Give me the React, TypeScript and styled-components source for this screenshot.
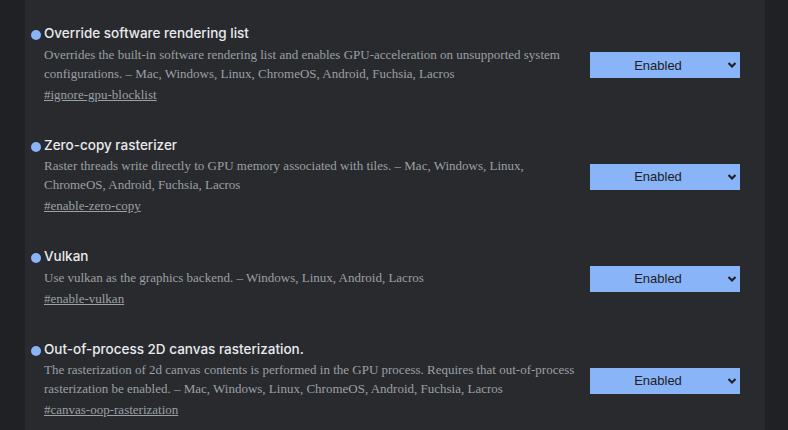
import React from "react";
import styled, { createGlobalStyle } from "styled-components";

const Global = createGlobalStyle`
  html, body { margin: 0; padding: 0; background: #202124; }
  body { width: 788px; height: 430px; overflow: hidden; }
`;

const Page = styled.div`
  display: flex;
  height: 430px;
  padding-left: 25px;
  background: #202124;
`;

const Panel = styled.div`
  width: 740px;
  background: #292a2d;
  padding: 23.4px 25px 0 6px;
  box-sizing: border-box;
  display: flex;
  flex-direction: column;
  gap: 31px;
`;

const Item = styled.div`
  display: grid;
  grid-template-columns: 13px 536px 1fr;
  align-items: center;
`;

const Dot = styled.span`
  align-self: start;
  width: 10px;
  height: 10px;
  margin-top: 7px;
  border-radius: 50%;
  background: #8ab4f8;
`;

const Body = styled.div`
  display: flex;
  flex-direction: column;
`;

const Title = styled.h3`
  margin: 0;
  font-family: Inter, "Noto Sans", sans-serif;
  font-weight: 500;
  font-size: 13.5px;
  line-height: 21.5px;
  color: #e8eaed;
  letter-spacing: 0;
`;

const Desc = styled.p`
  margin: 0;
  font-family: "Liberation Serif", serif;
  font-size: 13px;
  line-height: 19px;
  color: #9aa0a6;
`;

const Link = styled.a`
  margin-top: 2px;
  font-family: "Liberation Serif", serif;
  font-size: 13px;
  line-height: 19px;
  color: #9aa0a6;
  text-decoration: underline;
  align-self: flex-start;
`;

const SelectBox = styled.div`
  justify-self: end;
  margin: 3px 0 0 10px;
  width: 150px;
  height: 26px;
  box-sizing: border-box;
  background: #8ab4f8;
  display: flex;
  align-items: center;
  position: relative;
  font-family: "Liberation Sans", Arial, sans-serif;
  font-size: 13px;
  color: #202124;
`;

const SelectLabel = styled.span`
  flex: 1;
  text-align: center;
  padding-right: 14px;
`;

const Chevron = styled.svg`
  position: absolute;
  right: 3px;
  top: 9px;
`;

const flags = [
  {
    title: "Override software rendering list",
    desc: "Overrides the built-in software rendering list and enables GPU-acceleration on unsupported system configurations. – Mac, Windows, Linux, ChromeOS, Android, Fuchsia, Lacros",
    link: "#ignore-gpu-blocklist",
  },
  {
    title: "Zero-copy rasterizer",
    desc: "Raster threads write directly to GPU memory associated with tiles. – Mac, Windows, Linux, ChromeOS, Android, Fuchsia, Lacros",
    link: "#enable-zero-copy",
  },
  {
    title: "Vulkan",
    desc: "Use vulkan as the graphics backend. – Windows, Linux, Android, Lacros",
    link: "#enable-vulkan",
  },
  {
    title: "Out-of-process 2D canvas rasterization.",
    desc: "The rasterization of 2d canvas contents is performed in the GPU process. Requires that out-of-process rasterization be enabled. – Mac, Windows, Linux, ChromeOS, Android, Fuchsia, Lacros",
    link: "#canvas-oop-rasterization",
  },
];

export default function App() {
  return (
    <>
      <Global />
      <Page>
        <Panel>
          {flags.map((f) => (
            <Item key={f.link}>
              <Dot />
              <Body>
                <Title>{f.title}</Title>
                <Desc>{f.desc}</Desc>
                <Link href={f.link}>{f.link}</Link>
              </Body>
              <SelectBox>
                <SelectLabel>Enabled</SelectLabel>
                <Chevron width="10" height="8" viewBox="0 0 10 8">
                  <path d="M1.5 2 L5 5.5 L8.5 2" fill="none" stroke="#202124" strokeWidth="2.2" />
                </Chevron>
              </SelectBox>
            </Item>
          ))}
        </Panel>
      </Page>
    </>
  );
}
